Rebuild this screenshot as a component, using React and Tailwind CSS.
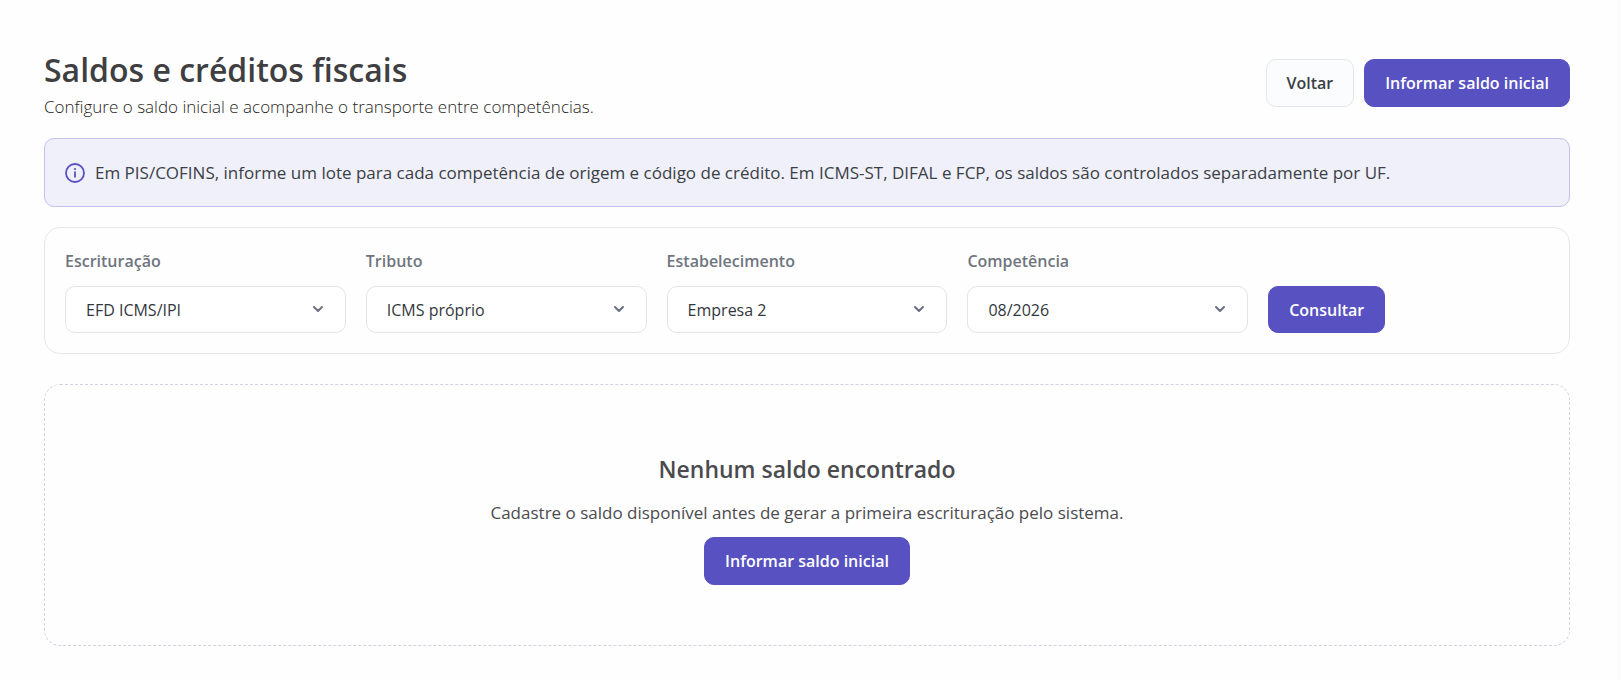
import React, { useState } from 'react';
import { ChevronDown } from 'lucide-react';

const FILTERS = [
    { id: 'escrituracao', label: 'Escrituração', options: ['EFD ICMS/IPI', 'EFD Contribuições'] },
    { id: 'tributo', label: 'Tributo', options: ['ICMS próprio', 'ICMS-ST', 'DIFAL', 'FCP'] },
    { id: 'estabelecimento', label: 'Estabelecimento', options: ['Empresa 2', 'Empresa 1'] },
    { id: 'competencia', label: 'Competência', options: ['08/2026', '07/2026'] },
];

const Button = ({ variant = 'primary', className = '', children, ...props }) => (
    <button
        type="button"
        className={`rounded-[10px] border px-5 text-base font-semibold whitespace-nowrap ${variant === 'primary'
                ? 'border-[#5751c2] bg-[#5751c2] text-white hover:bg-[#4a44b0]'
                : 'border-[#e4e6eb] bg-[#fbfcfe] text-[#3a3f45] hover:bg-gray-100'
            } ${className}`}
        {...props}
    >
        {children}
    </button>
);

const SelectField = ({ id, label, options, value, onChange }) => (
    <div>
        <label htmlFor={id} className="block text-base leading-6 font-semibold text-[#6f757e]">
            {label}
        </label>
        <div className="relative mt-[13px]">
            <select
                id={id}
                value={value}
                onChange={(e) => onChange(id, e.target.value)}
                className="h-[47px] w-full appearance-none rounded-[10px] border border-[#e4e4e7] bg-white pr-12 pl-5 text-base text-[#33373d] outline-none focus:border-[#5751c2]"
            >
                {options.map((option) => (
                    <option key={option} value={option}>{option}</option>
                ))}
            </select>
            <ChevronDown
                size={16}
                strokeWidth={3}
                className="pointer-events-none absolute top-[15px] right-5 text-[#6b6f80]"
            />
        </div>
    </div>
);

const App = () => {
    const [filters, setFilters] = useState({
        escrituracao: 'EFD ICMS/IPI',
        tributo: 'ICMS próprio',
        estabelecimento: 'Empresa 2',
        competencia: '08/2026',
    });

    const handleChange = (id, value) => {
        setFilters({ ...filters, [id]: value });
    };

    return (
        <main className="min-h-screen border-r-4 border-[#fbfbfb] bg-[#fefefe] pt-[52px] pr-[47px] pb-8 pl-11 font-['Open_Sans','Noto_Sans',sans-serif] text-[#4b4b4f]">
            {/* Header */}
            <header className="flex items-start justify-between gap-6">
                <div>
                    <h1 className="text-[32px] leading-9 font-semibold text-[#3f3f42]">
                        Saldos e créditos fiscais
                    </h1>
                    <p className="mt-[7px] text-[17px] leading-6 font-light text-[#1f1f22]">
                        Configure o saldo inicial e acompanhe o transporte entre competências.
                    </p>
                </div>
                <div className="mt-[7px] flex gap-[10px]">
                    <Button variant="secondary" className="h-12">Voltar</Button>
                    <Button className="h-12">Informar saldo inicial</Button>
                </div>
            </header>

            {/* Notice */}
            <div className="mt-[19px] flex min-h-[69px] items-center gap-[10px] rounded-[10px] border border-[#c4c0e9] bg-[#f0f0fa] px-5 text-[17px] text-[#3a3f45]">
                <svg viewBox="0 0 20 20" fill="none" className="size-5 shrink-0 text-[#5751c2]" aria-hidden="true">
                    <circle cx="10" cy="10" r="9" stroke="currentColor" strokeWidth="1.8" />
                    <path d="M10 8.4v6" stroke="currentColor" strokeWidth="1.8" />
                    <circle cx="10" cy="6" r="1.1" fill="currentColor" />
                </svg>
                <p>
                    Em PIS/COFINS, informe um lote para cada competência de origem e código de crédito. Em ICMS-ST, DIFAL e FCP, os saldos são controlados separadamente por UF.
                </p>
            </div>

            {/* Filters */}
            <form
                onSubmit={(e) => e.preventDefault()}
                className="mt-5 grid grid-cols-5 items-end gap-5 rounded-2xl border border-[#e8e8ea] px-5 pt-[21px] pb-5"
            >
                {FILTERS.map((filter) => (
                    <SelectField
                        key={filter.id}
                        {...filter}
                        value={filters[filter.id]}
                        onChange={handleChange}
                    />
                ))}
                <Button type="submit" className="h-[47px] justify-self-start">Consultar</Button>
            </form>

            {/* Empty state */}
            <section className="mt-[30px] flex flex-col items-center rounded-2xl border border-dashed border-[#cfd3e2] pt-[68px] pb-[60px] text-center">
                <h2 className="text-[23px] leading-8 font-semibold">Nenhum saldo encontrado</h2>
                <p className="mt-4 mb-3 text-[17px] leading-6">
                    Cadastre o saldo disponível antes de gerar a primeira escrituração pelo sistema.
                </p>
                <Button className="h-12">Informar saldo inicial</Button>
            </section>
        </main>
    );
};

export default App;
